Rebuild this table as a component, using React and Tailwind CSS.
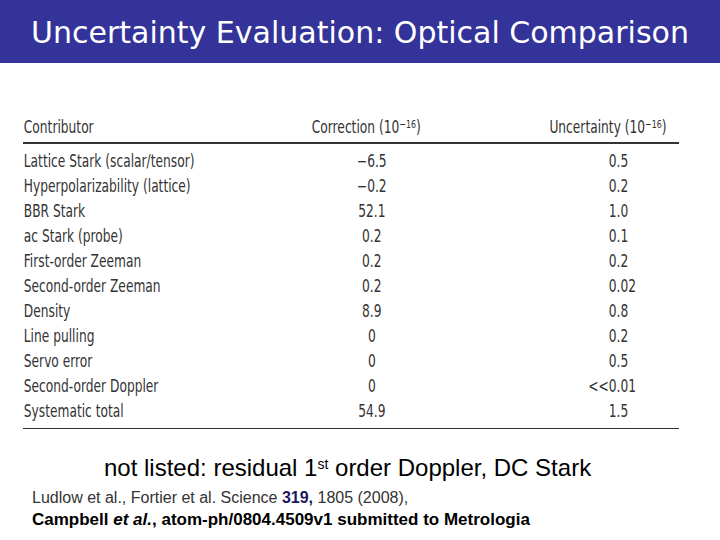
const rows = [
  ["Lattice Stark (scalar/tensor)", "\u22126.5", "0", ".5"],
  ["Hyperpolarizability (lattice)", "\u22120.2", "0", ".2"],
  ["BBR Stark", "52.1", "1", ".0"],
  ["ac Stark (probe)", "0.2", "0", ".1"],
  ["First-order Zeeman", "0.2", "0", ".2"],
  ["Second-order Zeeman", "0.2", "0", ".02"],
  ["Density", "8.9", "0", ".8"],
  ["Line pulling", "0", "0", ".2"],
  ["Servo error", "0", "0", ".5"],
  ["Second-order Doppler", "0", "<<0", ".01"],
  ["Systematic total", "54.9", "1", ".5"],
];

const tableFont = { fontFamily: '"DejaVu Sans Condensed", "DejaVu Sans", sans-serif' };

export default function App() {
  return (
    <div className="w-[720px] h-[540px] bg-white overflow-hidden">
      {/* title bar */}
      <div className="h-[63px] bg-[#333399] flex items-center justify-center">
        <h1 className="text-white text-[30px] leading-none pt-[2px]" style={{ fontFamily: '"DejaVu Sans", sans-serif' }}>
          Uncertainty Evaluation: Optical Comparison
        </h1>
      </div>

      {/* table (condensed by a horizontal scale, like the scanned figure) */}
      <div
        className="ml-[23px] w-[820px] mt-[51px] origin-left scale-x-[0.8] text-[#333] text-[17px] whitespace-nowrap"
        style={tableFont}
      >
        <div className="grid grid-cols-[360px_297px_1fr] h-[30px] items-center border-b-2 border-[#333]">
          <div className="pl-[1px]">Contributor</div>
          <div className="pl-[1px]">
            Correction (10<sup className="text-[11px]">{"\u221216"}</sup>)
          </div>
          <div className="pl-[1px]">
            Uncertainty (10<sup className="text-[11px]">{"\u221216"}</sup>)
          </div>
        </div>
        <div className="pt-[5px] pb-[4px] border-b border-[#333]">
          {rows.map((r) => (
            <div key={r[0]} className="grid grid-cols-[360px_297px_1fr] h-[25px] items-center">
              <div className="pl-[1px]">{r[0]}</div>
              <div className="w-[152px] text-center">{r[1]}</div>
              <div className="flex">
                <span className="w-[85px] text-right">{r[2]}</span>
                <span>{r[3]}</span>
              </div>
            </div>
          ))}
        </div>
      </div>

      {/* notes */}
      <div style={{ fontFamily: '"Liberation Sans", Arial, sans-serif' }}>
        <p className="ml-[104px] mt-[27px] text-[24px] leading-none text-black">
          not listed: residual 1<sup className="text-[14px]">st</sup> order Doppler, DC Stark
        </p>
        <p className="ml-[32px] mt-[10px] text-[16px] leading-none text-[#333]">
          Ludlow et al., Fortier et al. Science <b className="text-[#1a1a5e]">319,</b> 1805 (2008),
        </p>
        <p className="ml-[32px] mt-[5px] text-[17px] leading-none font-bold text-black">
          Campbell <i>et al.</i>, atom-ph/0804.4509v1 submitted to Metrologia
        </p>
      </div>
    </div>
  );
}
